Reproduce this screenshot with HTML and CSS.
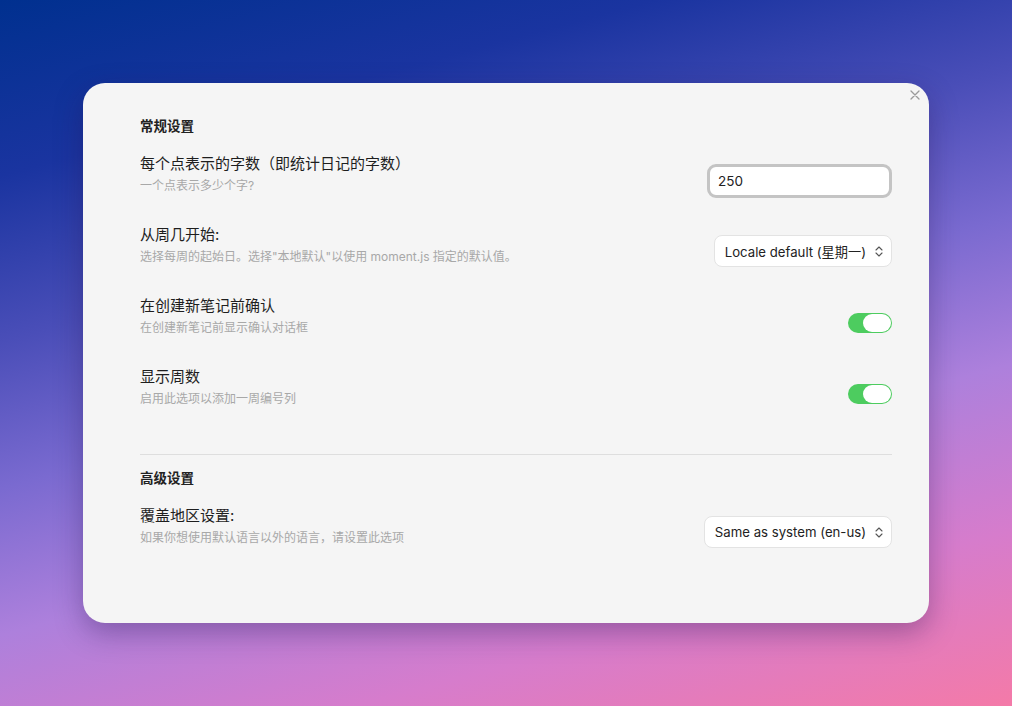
FILE: index.html
```html
<!DOCTYPE html>
<html>

<head>
  <meta charset="UTF-8">
  <title>设置</title>
  <link rel="stylesheet" href="styles.css">
</head>

<body>
  <div class="modal">
    <div class="modal-close">
      <svg width="10" height="10" viewBox="0 0 10 10"><path d="M1 1L9 9M9 1L1 9" stroke="#9a9a9a" stroke-width="1.3" stroke-linecap="round"/></svg>
    </div>

    <div class="section">
      <div class="section-title">常规设置</div>

      <div class="setting-item">
        <div class="setting-info">
          <div class="setting-name">每个点表示的字数（即统计日记的字数）</div>
          <div class="setting-desc">一个点表示多少个字?</div>
        </div>
        <div class="setting-control">
          <input type="text" class="text-input" value="250">
        </div>
      </div>

      <div class="setting-item">
        <div class="setting-info">
          <div class="setting-name">从周几开始:</div>
          <div class="setting-desc">选择每周的起始日。选择"本地默认"以使用 moment.js 指定的默认值。</div>
        </div>
        <div class="setting-control">
          <div class="dropdown">Locale default (星期一)
            <svg class="chevron" width="8" height="11" viewBox="0 0 8 11"><path d="M1 4L4 1L7 4M1 7L4 10L7 7" fill="none" stroke="#555" stroke-width="1.1" stroke-linecap="round" stroke-linejoin="round"/></svg>
          </div>
        </div>
      </div>

      <div class="setting-item">
        <div class="setting-info">
          <div class="setting-name">在创建新笔记前确认</div>
          <div class="setting-desc">在创建新笔记前显示确认对话框</div>
        </div>
        <div class="setting-control">
          <div class="toggle on"><div class="knob"></div></div>
        </div>
      </div>

      <div class="setting-item">
        <div class="setting-info">
          <div class="setting-name">显示周数</div>
          <div class="setting-desc">启用此选项以添加一周编号列</div>
        </div>
        <div class="setting-control">
          <div class="toggle on"><div class="knob"></div></div>
        </div>
      </div>
    </div>

    <div class="section advanced">
      <div class="section-title">高级设置</div>

      <div class="setting-item">
        <div class="setting-info">
          <div class="setting-name">覆盖地区设置:</div>
          <div class="setting-desc">如果你想使用默认语言以外的语言，请设置此选项</div>
        </div>
        <div class="setting-control">
          <div class="dropdown">Same as system (en-us)
            <svg class="chevron" width="8" height="11" viewBox="0 0 8 11"><path d="M1 4L4 1L7 4M1 7L4 10L7 7" fill="none" stroke="#555" stroke-width="1.1" stroke-linecap="round" stroke-linejoin="round"/></svg>
          </div>
        </div>
      </div>
    </div>
  </div>
</body>

</html>
```

FILE: styles.css
```css
* {
  margin: 0;
  padding: 0;
  box-sizing: border-box;
}

body {
  font-family: Inter, "Noto Sans CJK SC", sans-serif;
  width: 1012px;
  height: 706px;
  overflow: hidden;
  padding: 83px 83px 0 83px;
  background: linear-gradient(165deg, #00308f 0%, #1a34a0 18%, #4a4eb8 35%, #7a6ad0 50%, #ad80dc 65%, #d67ccc 82%, #f47aa8 100%);
}

/* 弹窗 */
.modal {
  position: relative;
  width: 846px;
  height: 540px;
  background: #f5f5f5;
  border-radius: 22px;
  padding: 33px 37px 0 57px;
  box-shadow: 0 10px 28px rgba(40, 20, 80, 0.35);
}

.modal-close {
  position: absolute;
  top: 7px;
  right: 9px;
  width: 10px;
  height: 10px;
  display: flex;
}

.section-title {
  font-size: 13.5px;
  font-weight: 700;
  line-height: 20px;
  color: #222;
  margin-bottom: 3px;
}

.section {
  padding-bottom: 31px;
}

.section.advanced {
  border-top: 1px solid #dedede;
  padding-top: 13px;
}

/* 设置项 */
.setting-item {
  display: flex;
  align-items: flex-start;
  justify-content: space-between;
  padding: 15px 0;
}

.setting-name {
  font-size: 15px;
  line-height: 20px;
  color: #1e1e1e;
  margin-bottom: 3px;
}

.setting-desc {
  font-size: 12px;
  line-height: 18px;
  color: #a8a8a8;
}

.setting-control {
  margin-top: 10px;
  height: 31px;
  display: flex;
}

.text-input {
  width: 185px;
  height: 34px;
  border: 3px solid #c4c4c4;
  border-radius: 9px;
  background: white;
  padding: 0 8px;
  font-family: Inter, sans-serif;
  font-size: 13.5px;
  color: #222;
  outline: none;
}

.dropdown {
  display: flex;
  align-items: center;
  height: 32px;
  padding: 0 8px 0 10px;
  background: white;
  border: 1px solid #e3e3e3;
  border-radius: 8px;
  font-size: 13.2px;
  color: #222;
  gap: 9px;
}

.chevron {
  margin-top: 1px;
}

.toggle {
  margin-top: 7px;
  width: 44px;
  height: 20px;
  border-radius: 10px;
  background: #d0d0d0;
  display: flex;
  align-items: center;
  padding: 1px;
}

.toggle.on {
  background: #4dcc5f;
  justify-content: flex-end;
}

.knob {
  width: 28px;
  height: 18px;
  border-radius: 9px;
  background: white;
}
```
